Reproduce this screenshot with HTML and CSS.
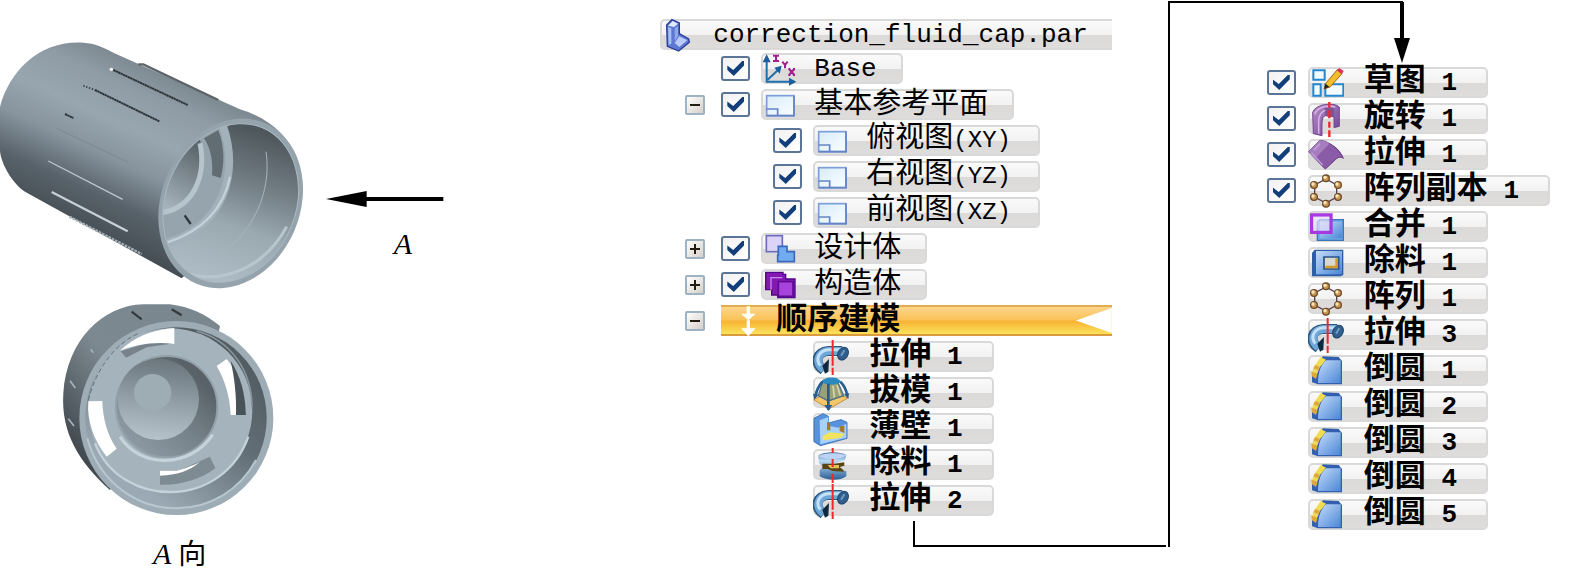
FILE: index.html
```
<!doctype html>
<html lang="zh-CN">

<head>
    <meta charset="UTF-8">
    <meta name="viewport" content="width=device-width, initial-scale=1.0">
    <title>correction_fluid_cap.par</title>
    <link rel="stylesheet" href="styles.css">
</head>

<body>
    <!-- icon shapes used by the tree rows -->
    <svg class="defs" width="0" height="0" aria-hidden="true">
        <defs>
            <linearGradient id="blue" x1="0" y1="0" x2="1" y2="1">
                <stop offset="0" stop-color="#c4dcf8" />
                <stop offset="1" stop-color="#4b86d8" />
            </linearGradient>
            <linearGradient id="pale" x1="0" y1="0" x2="1" y2="1">
                <stop offset="0" stop-color="#d8ecfb" />
                <stop offset="1" stop-color="#fafeff" />
            </linearGradient>
            <linearGradient id="purple" x1="0" y1="0" x2="1" y2="1">
                <stop offset="0" stop-color="#b98fcb" />
                <stop offset="1" stop-color="#6d3f92" />
            </linearGradient>
            <linearGradient id="tube" x1="0" y1="0" x2="0" y2="1">
                <stop offset="0" stop-color="#3f70a0" />
                <stop offset=".3" stop-color="#b9dcf4" />
                <stop offset="1" stop-color="#2c5f96" />
            </linearGradient>
        </defs>
        <symbol id="part" viewBox="0 0 108 108">
            <path d="M20 24 36 8 58 18 58 50 86 66 88 76 56 102 22 88Z" fill="#5d78d0" stroke="#2b3d99" stroke-width="4" />
            <path d="M24 26 38 12 54 20 42 30Z" fill="#dfe9ff" />
            <path d="M24 30 34 34 34 80 26 84Z" fill="#a9c0f5" />
            <path d="M44 34 54 28V58L44 74Z" fill="#8fa8ea" />
            <path d="M44 78 58 58 82 70 58 90Z" fill="#bacbfa" />
        </symbol>
        <symbol id="base" viewBox="0 0 108 108">
            <path d="M17 92V18M14 92H98M20 86 58 50" stroke="#1e6fae" stroke-width="6" fill="none" />
            <path d="M5 34 17 10 29 34ZM84 80 106 92 84 104ZM40 50 62 44 56 68Z" fill="#1b5f9f" />
            <path d="M36 14H54M45 14V30M36 30H54M64 32 72 42 80 32M72 42V52M84 54 100 72M100 54 84 72M82 54H88M96 54H102M82 72H88M96 72H102" stroke="#a2208e" stroke-width="6" fill="none" />
        </symbol>
        <symbol id="plane" viewBox="0 0 108 108">
            <rect x="17" y="26" width="82" height="60" fill="url(#pale)" stroke="#7d9ed8" stroke-width="5" />
            <path d="M17 66H50V86M99 26V86H17" fill="none" stroke="#6484c6" stroke-width="5" />
        </symbol>
        <symbol id="design" viewBox="0 0 108 108">
            <rect x="16" y="14" width="48" height="48" fill="#dcd4f6" stroke="#6c6cc0" stroke-width="5" />
            <path d="M52 46H78V62H100V92H50V72H52Z" fill="#71abf0" stroke="#3a68bd" stroke-width="5" />
        </symbol>
        <symbol id="construct" viewBox="0 0 108 108">
            <path d="M14 16H66V22H74V36H102V92H50V84H32V68H14Z" fill="#8318b4" stroke="#4f0788" stroke-width="4" />
            <path d="M30 68V32H64" fill="none" stroke="#c68ce8" stroke-width="4" />
            <rect x="52" y="44" width="44" height="44" fill="#a743dc" stroke="#5e0c92" stroke-width="5" />
        </symbol>
        <symbol id="ordered" viewBox="0 0 108 108">
            <path d="M80 10H90V32H107L85 52 63 32H80ZM80 52H90V76H107L85 100 63 76H80Z" fill="#fff" />
        </symbol>
        <symbol id="revolve" viewBox="0 0 108 108">
            <path d="M32 94C2 72 10 38 46 36H88" fill="none" stroke="#2e587f" stroke-width="30" />
            <path d="M32 92C6 72 12 40 46 36H88" fill="none" stroke="#6ea6d8" stroke-width="24" />
            <path d="M22 80C6 60 18 34 46 32H84" fill="none" stroke="#c3e1f8" stroke-width="9" />
            <path d="M28 80 48 60 46 98 36 104Z" fill="#10283f" />
            <ellipse cx="90" cy="44" rx="15" ry="20" transform="rotate(28 90 44)" fill="#315f8d" stroke="#1f4569" stroke-width="3" />
            <path d="M84 50 94 34" stroke="#6f9cc6" stroke-width="6" />
            <path d="M59 3V80M59 86V108" stroke="#f0282d" stroke-width="6" />
        </symbol>
        <symbol id="draft" viewBox="0 0 108 108">
            <path d="M2 74 46 52 106 68 48 102Z" fill="#f4c66b" stroke="#c6913b" stroke-width="3" />
            <path d="M30 16 70 12 92 62 46 78 16 62Z" fill="#99a276" stroke="#4f6f87" stroke-width="4" />
            <path d="M26 20C36 2 76 4 84 20 68 32 40 32 26 20Z" fill="#2b89bd" />
            <path d="M28 20C18 32 10 48 8 62M46 26V104M82 20C92 30 100 46 102 60" stroke="#245d90" stroke-width="8" fill="none" />
            <path d="M60 32 64 68M72 30 82 62" stroke="#d6d6a8" stroke-width="5" />
            <path d="M34 90H58L46 108ZM0 56 16 60 4 74ZM94 58 108 54 106 72Z" fill="#245d90" />
        </symbol>
        <symbol id="thin" viewBox="0 0 108 108">
            <path d="M3 22 30 8 46 16V36L84 26 102 34V82L22 104 3 92Z" fill="#5793dd" stroke="#4377ba" stroke-width="3" />
            <path d="M20 28 46 18V44L76 50 100 38V80L22 100Z" fill="#a8d0f8" />
            <path d="M42 32 52 38V58H42ZM80 46 94 44V66L80 60Z" fill="#a57b22" />
            <path d="M28 76 50 64 94 68 84 80 30 88Z" fill="#f2e35c" />
        </symbol>
        <symbol id="cutrev" viewBox="0 0 108 108">
            <path d="M16 26C30 14 80 12 100 24L96 40 64 50 68 68 100 72V88C80 104 38 100 20 88V70L30 60 18 48Z" fill="url(#tube)" />
            <path d="M16 28C30 16 84 16 100 26 80 38 38 40 16 28Z" fill="#bcd3f1" />
            <path d="M28 50H64L94 46V56L80 60 92 70V74L60 72 44 66 28 66Z" fill="#5b4414" />
            <path d="M44 54H78V64H52Z" fill="#e0c256" />
            <path d="M59 3V18M59 36V60M59 80V108" stroke="#f0282d" stroke-width="6" />
        </symbol>
        <symbol id="sketch" viewBox="0 0 108 108">
            <path d="M16 16H50V44H16ZM16 58H38V92H16ZM52 58H106V92H52Z" fill="#f4fbff" stroke="#2386d0" stroke-width="6" />
            <path d="M48 72 54 54 88 14 102 26 66 66Z" fill="#f2bf2b" stroke="#a36a1a" stroke-width="3" />
            <path d="M48 72 53 56 64 66Z" fill="#222" />
            <path d="M86 16 94 9 107 18 101 28Z" fill="#da315c" />
        </symbol>
        <symbol id="surfrev" viewBox="0 0 108 108">
            <path d="M14 34C24 6 82 4 94 18V76L78 80V48L52 44C40 48 42 64 42 104L16 98Z" fill="url(#purple)" stroke="#74488c" stroke-width="3" />
            <path d="M52 44 78 48V20H48Z" fill="#7d5594" />
            <path d="M20 40C30 16 60 12 82 18M32 98V56C34 42 42 32 52 28" fill="none" stroke="#d4b1e2" stroke-width="5" />
            <path d="M64 3V20M64 28V52M64 62V80M64 88V108" stroke="#f0282d" stroke-width="7" />
        </symbol>
        <symbol id="surfext" viewBox="0 0 108 108">
            <path d="M2 44 36 10C50 10 66 20 78 28 92 38 100 50 106 64 98 58 90 60 82 68L52 96 34 78Z" fill="#8a5ba6" stroke="#64377f" stroke-width="3" />
            <path d="M2 44 36 10C46 10 56 14 64 20L22 64Z" fill="#a67dbd" />
            <path d="M10 48 44 84M18 40 36 20" stroke="#c49cda" stroke-width="5" />
        </symbol>
        <symbol id="pattern" viewBox="0 0 108 108">
            <path d="M54 18 86 36V72L54 90 20 72V36Z" fill="none" stroke="#573f4e" stroke-width="4" />
            <g fill="#c89650" stroke="#6d4a28" stroke-width="4">
                <circle cx="54" cy="16" r="10" />
                <circle cx="90" cy="36" r="10" />
                <circle cx="90" cy="72" r="10" />
                <circle cx="54" cy="92" r="10" />
                <circle cx="18" cy="72" r="10" />
                <circle cx="18" cy="36" r="10" />
            </g>
            <g fill="#fbe5bd">
                <circle cx="51" cy="13" r="5" />
                <circle cx="87" cy="33" r="5" />
                <circle cx="87" cy="69" r="5" />
                <circle cx="51" cy="89" r="5" />
                <circle cx="15" cy="69" r="5" />
                <circle cx="15" cy="33" r="5" />
            </g>
        </symbol>
        <symbol id="unite" viewBox="0 0 108 108">
            <path d="M28 40 36 32H106V94H28Z" fill="#6baae6" stroke="#3c76b8" stroke-width="4" />
            <path d="M36 38H102V88H36Z" fill="url(#blue)" />
            <path d="M11 18H69V70H11Z" fill="none" stroke="#a838e0" stroke-width="10" />
            <path d="M16 23H64V65H16Z" fill="#e6dcfa" fill-opacity=".7" />
        </symbol>
        <symbol id="cutout" viewBox="0 0 108 108">
            <path d="M12 24 20 14H106V90L98 94H12Z" fill="#2e5ea6" />
            <path d="M24 18H102V88H24Z" fill="url(#blue)" />
            <path d="M48 36H92V72H48Z" fill="#d8d8d2" stroke="#294f87" stroke-width="5" />
            <path d="M52 70H90V40H82V62H52Z" fill="#d09a24" />
        </symbol>
        <symbol id="round" viewBox="0 0 108 108">
            <path d="M12 70 44 10 92 12 102 24V94H30L12 88Z" fill="#345fae" />
            <path d="M54 22H98V90H30C30 60 38 36 54 22Z" fill="url(#blue)" />
            <path d="M12 62 16 44 38 12 54 20 36 42 26 66Z" fill="#f0dc51" />
            <path d="M10 56 24 60 28 66 24 78 12 70ZM22 36 36 42 30 52 16 46Z" fill="#dfa83d" />
        </symbol>
    </svg>

    <div class="page">
        <div class="views">
            <figure class="view">
                <svg class="side" viewBox="0 -90 930 900" role="img" aria-label="Cap">
                    <defs>
                        <linearGradient id="shell" gradientUnits="userSpaceOnUse" x1="400" y1="90" x2="180" y2="570">
                            <stop offset="0" stop-color="#7d8991" />
                            <stop offset=".15" stop-color="#8f9ca5" />
                            <stop offset=".36" stop-color="#98a6af" />
                            <stop offset=".56" stop-color="#87949d" />
                            <stop offset=".78" stop-color="#58626a" />
                            <stop offset="1" stop-color="#454e54" />
                        </linearGradient>
                        <linearGradient id="bore" gradientUnits="userSpaceOnUse" x1="780" y1="300" x2="640" y2="740">
                            <stop offset="0" stop-color="#4d565b" />
                            <stop offset=".35" stop-color="#727d84" />
                            <stop offset=".65" stop-color="#9aa8b0" />
                            <stop offset="1" stop-color="#adbbc4" />
                        </linearGradient>
                        <linearGradient id="hole" gradientUnits="userSpaceOnUse" x1="600" y1="350" x2="500" y2="530">
                            <stop offset="0" stop-color="#5a646a" />
                            <stop offset="1" stop-color="#a5b2bb" />
                        </linearGradient>
                        <clipPath id="mouth">
                            <ellipse cx="692" cy="519" rx="195" ry="245" transform="rotate(23 692 519)" />
                        </clipPath>
                    </defs>
                    <path d="M0 230C30 120 120 30 250 38 285 40 310 52 340 68L720 238C800 262 860 310 888 380L700 600 545 745 75 485C30 455 0 390 0 360Z" fill="url(#shell)" />
                    <path d="M415 103 430 103 655 210" stroke="#5c646a" stroke-width="7" fill="none" />
                    <ellipse cx="692" cy="520" rx="208" ry="262" transform="rotate(23 692 520)" fill="#95a3ac" />
                    <g clip-path="url(#mouth)">
                        <rect x="470" y="260" width="450" height="520" fill="url(#bore)" />
                        <path d="M460 280H665C725 410 700 560 495 640H460Z" fill="#96a4ad" />
                        <path d="M460 300H590C640 420 590 530 485 550H460Z" fill="url(#hole)" />
                        <path d="M600 340C620 440 580 530 488 548" stroke="#b6c4cc" stroke-width="15" fill="none" />
                        <path d="M668 285C720 430 670 590 496 640" stroke="#a3b1ba" stroke-width="24" fill="none" />
                        <path d="M690 440C670 540 600 605 500 638" stroke="#c3d1d9" stroke-width="7" fill="none" />
                        <path d="M612 325 655 300C674 350 674 400 662 444L636 436C640 390 630 350 612 325Z" fill="#626c73" />
                        <path d="M554 556 572 582" stroke="#30383d" stroke-width="7" />
                        <path d="M798 365C820 510 730 680 560 706" stroke="#a9b6be" stroke-width="3" fill="none" />
                        <path d="M500 700C610 780 780 740 860 590" stroke="#b8c6ce" stroke-width="9" fill="none" />
                    </g>
                    <ellipse cx="692" cy="519" rx="195" ry="245" transform="rotate(23 692 519)" fill="none" stroke="#aab8c1" stroke-width="3" />
                    <path d="M340 120 563 225M285 180 478 274M195 252 220 264" stroke="#2d3439" stroke-width="6" stroke-dasharray="7 1" />
                    <path d="M250 167 285 180" stroke="#2d3439" stroke-width="5" stroke-dasharray="4 5" />
                    <path d="M170 295 385 397" stroke="#7d8990" stroke-width="3" />
                    <path d="M145 393 368 508" stroke="#bcc8cf" stroke-width="4" />
                    <path d="M155 486 383 604" stroke="#c6d0d6" stroke-width="7" />
                    <path d="M208 560 425 672" stroke="#a7b1b7" stroke-width="7" stroke-dasharray="8 3" />
                    <circle cx="334" cy="118" r="5" fill="#fff" />
                </svg>
                <div class="direction">
                    <svg class="arrow" viewBox="0 0 354 48" aria-hidden="true">
                        <path d="M0 24 122 0V18H352V30H122V48Z" />
                    </svg>
                    <em>A</em>
                </div>
            </figure>
            <figure class="view front-view">
                <svg class="front" viewBox="60 30 660 660" role="img" aria-label="Cap, direction A">
                    <defs>
                        <linearGradient id="rim" x1=".7" y1="0" x2="0" y2=".7">
                            <stop offset="0" stop-color="#7b878f" />
                            <stop offset=".5" stop-color="#7d8991" />
                            <stop offset="1" stop-color="#424a50" />
                        </linearGradient>
                        <linearGradient id="wall" gradientUnits="userSpaceOnUse" x1="660" y1="280" x2="380" y2="650">
                            <stop offset="0" stop-color="#535d64" />
                            <stop offset=".4" stop-color="#626e76" />
                            <stop offset="1" stop-color="#9aa9b3" />
                        </linearGradient>
                        <linearGradient id="well" gradientUnits="userSpaceOnUse" x1="500" y1="290" x2="300" y2="500">
                            <stop offset="0" stop-color="#596268" />
                            <stop offset=".5" stop-color="#78848c" />
                            <stop offset="1" stop-color="#8e9ba4" />
                        </linearGradient>
                        <linearGradient id="cone" gradientUnits="userSpaceOnUse" x1="370" y1="210" x2="340" y2="450">
                            <stop offset="0" stop-color="#6b767d" />
                            <stop offset=".5" stop-color="#919ea6" />
                            <stop offset="1" stop-color="#b6c3cb" />
                        </linearGradient>
                    </defs>
                    <path d="M70 310C80 150 190 45 310 43H390C450 50 500 75 540 108L500 300 210 600C120 520 62 430 70 310Z" fill="url(#rim)" />
                    <circle cx="409" cy="384" r="291" fill="#9eacb5" />
                    <circle cx="408" cy="384" r="272" fill="url(#wall)" />
                    <path d="M142 445C180 585 300 655 408 655 510 655 600 600 648 510" fill="none" stroke="#b7c7d0" stroke-width="6" />
                    <circle cx="391" cy="361" r="246" fill="#a5b3bc" />
                    <path d="M165 460C205 560 300 606 391 606 500 606 590 540 625 440" fill="none" stroke="#c4d2da" stroke-width="7" />
                    <path d="M470 123C570 150 635 240 636 350" fill="none" stroke="#87949c" stroke-width="5" />
                    <circle cx="380" cy="350" r="152" fill="url(#well)" stroke="#93a1aa" stroke-width="6" />
                    <path d="M240 440C300 536 450 536 518 434" fill="none" stroke="#c6d3da" stroke-width="10" />
                    <circle cx="355" cy="328" r="122" fill="url(#cone)" />
                    <circle cx="338" cy="308" r="56" fill="#9eacb4" />
                    <path d="M242 184 325 158 403 160 320 172 258 203Z" fill="#77828a" />
                    <path d="M240 182C280 142 340 118 403 114V162C345 154 285 164 240 182Z" fill="#fff" />
                    <path d="M560 207C596 250 616 310 618 375H572C570 325 558 276 530 228Z" fill="#fff" />
                    <path d="M572 212C602 260 616 310 618 375H588C590 320 584 265 572 212Z" fill="#485259" />
                    <path d="M145 334 187 333C188 385 202 435 230 476L200 500C162 452 140 392 145 334Z" fill="#fff" />
                    <path d="M360 542H415L510 500 526 535C480 570 420 586 360 584Z" fill="#7f8b93" />
                    <path d="M360 542H410C440 534 460 526 480 516 450 542 410 556 360 557Z" fill="#fff" />
                    <path d="M275 65 305 88M395 58 425 76" stroke="#343b40" stroke-width="7" />
                    <path d="M90 272 106 294M85 386 102 408M152 178 160 188" stroke="#a8b3ba" stroke-width="5" />
                    <path d="M145 330C165 250 215 165 300 128" stroke="#65717a" stroke-width="3" stroke-dasharray="14 8" fill="none" />
                </svg>
                <figcaption><em>A</em> 向</figcaption>
            </figure>
        </div>

        <div class="tree">
            <div class="item root"><svg class="icon"><use href="#part" /></svg><span class="name code">correction_fluid_cap.par</span></div>
            <ul>
                <li class="row">
                    <span class="toggle-space"></span>
                    <input type="checkbox" id="c-base" checked>
                    <label class="item" for="c-base"><svg class="icon"><use href="#base" /></svg><span class="name code">Base</span></label>
                </li>
                <li>
                    <div class="row">
                        <button type="button" class="toggle" aria-label="Collapse"></button>
                        <input type="checkbox" id="c-planes" checked>
                        <label class="item" for="c-planes"><svg class="icon"><use href="#plane" /></svg><span class="name">基本参考平面</span></label>
                    </div>
                    <ul class="planes">
                        <li class="row">
                            <input type="checkbox" id="c-xy" checked>
                            <label class="item" for="c-xy"><svg class="icon"><use href="#plane" /></svg><span class="name">俯视图<span class="axis">(XY)</span></span></label>
                        </li>
                        <li class="row">
                            <input type="checkbox" id="c-yz" checked>
                            <label class="item" for="c-yz"><svg class="icon"><use href="#plane" /></svg><span class="name">右视图<span class="axis">(YZ)</span></span></label>
                        </li>
                        <li class="row">
                            <input type="checkbox" id="c-xz" checked>
                            <label class="item" for="c-xz"><svg class="icon"><use href="#plane" /></svg><span class="name">前视图<span class="axis">(XZ)</span></span></label>
                        </li>
                    </ul>
                </li>
                <li class="row">
                    <button type="button" class="toggle closed" aria-label="Expand"></button>
                    <input type="checkbox" id="c-design" checked>
                    <label class="item" for="c-design"><svg class="icon"><use href="#design" /></svg><span class="name">设计体</span></label>
                </li>
                <li class="row">
                    <button type="button" class="toggle closed" aria-label="Expand"></button>
                    <input type="checkbox" id="c-construct" checked>
                    <label class="item" for="c-construct"><svg class="icon"><use href="#construct" /></svg><span class="name">构造体</span></label>
                </li>
                <li>
                    <div class="row">
                        <button type="button" class="toggle" aria-label="Collapse"></button>
                        <div class="item ordered"><svg class="icon"><use href="#ordered" /></svg><span class="name">顺序建模</span></div>
                    </div>
                    <ul class="features">
                        <li class="row"><div class="item"><svg class="icon"><use href="#revolve" /></svg><span class="name">拉伸<span class="num"> 1</span></span></div></li>
                        <li class="row"><div class="item"><svg class="icon"><use href="#draft" /></svg><span class="name">拔模<span class="num"> 1</span></span></div></li>
                        <li class="row"><div class="item"><svg class="icon"><use href="#thin" /></svg><span class="name">薄壁<span class="num"> 1</span></span></div></li>
                        <li class="row"><div class="item"><svg class="icon"><use href="#cutrev" /></svg><span class="name">除料<span class="num"> 1</span></span></div></li>
                        <li class="row"><div class="item"><svg class="icon"><use href="#revolve" /></svg><span class="name">拉伸<span class="num"> 2</span></span></div></li>
                    </ul>
                </li>
            </ul>
        </div>

        <ul class="features more">
            <li class="row">
                <input type="checkbox" id="c-sketch" checked>
                <label class="item" for="c-sketch"><svg class="icon"><use href="#sketch" /></svg><span class="name">草图<span class="num"> 1</span></span></label>
            </li>
            <li class="row">
                <input type="checkbox" id="c-revolve" checked>
                <label class="item" for="c-revolve"><svg class="icon"><use href="#surfrev" /></svg><span class="name">旋转<span class="num"> 1</span></span></label>
            </li>
            <li class="row">
                <input type="checkbox" id="c-extrude" checked>
                <label class="item" for="c-extrude"><svg class="icon"><use href="#surfext" /></svg><span class="name">拉伸<span class="num"> 1</span></span></label>
            </li>
            <li class="row">
                <input type="checkbox" id="c-copy" checked>
                <label class="item" for="c-copy"><svg class="icon"><use href="#pattern" /></svg><span class="name">阵列副本<span class="num"> 1</span></span></label>
            </li>
            <li class="row plain"><div class="item"><svg class="icon"><use href="#unite" /></svg><span class="name">合并<span class="num"> 1</span></span></div></li>
            <li class="row plain"><div class="item"><svg class="icon"><use href="#cutout" /></svg><span class="name">除料<span class="num"> 1</span></span></div></li>
            <li class="row plain"><div class="item"><svg class="icon"><use href="#pattern" /></svg><span class="name">阵列<span class="num"> 1</span></span></div></li>
            <li class="row plain"><div class="item"><svg class="icon"><use href="#revolve" /></svg><span class="name">拉伸<span class="num"> 3</span></span></div></li>
            <li class="row plain"><div class="item"><svg class="icon"><use href="#round" /></svg><span class="name">倒圆<span class="num"> 1</span></span></div></li>
            <li class="row plain"><div class="item"><svg class="icon"><use href="#round" /></svg><span class="name">倒圆<span class="num"> 2</span></span></div></li>
            <li class="row plain"><div class="item"><svg class="icon"><use href="#round" /></svg><span class="name">倒圆<span class="num"> 3</span></span></div></li>
            <li class="row plain"><div class="item"><svg class="icon"><use href="#round" /></svg><span class="name">倒圆<span class="num"> 4</span></span></div></li>
            <li class="row plain"><div class="item"><svg class="icon"><use href="#round" /></svg><span class="name">倒圆<span class="num"> 5</span></span></div></li>
        </ul>

        <!-- line from the end of the first list to the top of the second -->
        <svg class="connector" viewBox="0 0 1580 569" aria-hidden="true">
            <path d="M914 521V546H1166M1169 547V2H1403" fill="none" stroke="#000" stroke-width="2" />
            <path d="M1402 2V42" stroke="#000" stroke-width="4" />
            <path d="M1394 38H1410L1402 63Z" />
        </svg>
    </div>
</body>

</html>
```
FILE: styles.css
```
* {
    box-sizing: border-box;
}

body {
    margin: 0;
    background: white;
    color: #000;
    font-family: "Liberation Sans", "Noto Sans CJK SC", sans-serif;
}

.defs {
    display: block;
}

ul {
    list-style: none;
    margin: 0;
    padding: 0;
}

.page {
    position: relative;
    display: grid;
    grid-template-columns: 662fr 604fr 314fr;
    align-items: start;
}

.connector {
    position: absolute;
    top: 0;
    left: 0;
    width: 100%;
    pointer-events: none;
}

/* drawings */
.view {
    margin: 0;
    display: flex;
}

.side {
    width: 310px;
    height: 300px;
}

.direction {
    display: flex;
    flex-direction: column;
    align-items: flex-end;
    padding: 191px 0 0 16px;
}

.direction em {
    padding: 20px 32px 0 0;
}

.arrow {
    width: 118px;
    height: 16px;
}

.view em {
    font-family: "Liberation Serif", serif;
    font-size: 30px;
    line-height: 34px;
}

.front-view {
    flex-direction: column;
    width: 280px;
    padding-left: 60px;
}

.front {
    width: 220px;
    height: 220px;
}

.front-view figcaption {
    padding: 17px 0 0 93px;
    font-family: "Liberation Serif", "Noto Sans CJK SC", serif;
    font-size: 28px;
    line-height: 32px;
    height: 49px;
}

/* feature tree */
.tree {
    padding: 19px 155px 0 0;
}

.tree > ul {
    padding: 3px 0 0 25px;
}

.row {
    display: flex;
    align-items: center;
    margin-bottom: 5px;
}

.item {
    display: flex;
    align-items: center;
    height: 31px;
    padding-right: 24px;
    border: 2px solid #d9d9d9;
    border-radius: 5px;
    background: linear-gradient(#fafafa, #f2f2f2 50%, #dcdad9 52%, #dfdddc);
}

.root {
    border-right: 0;
    border-radius: 5px 0 0 5px;
}

.icon {
    flex: none;
    width: 36px;
    height: 36px;
    margin: -4px 17px -4px -2px;
}

.name {
    font-size: 29px;
    line-height: 28px;
    padding-bottom: 3px;
    white-space: pre;
}

.code {
    font-family: "Liberation Mono", monospace;
    font-size: 26px;
    padding-bottom: 0;
}

.axis {
    font-family: "Liberation Mono", monospace;
    font-size: 24px;
}

.planes .item {
    padding-right: 27px;
}

.toggle,
.toggle-space {
    flex: none;
    width: 20px;
    margin: 0 16px 0 0;
}

.toggle {
    position: relative;
    height: 20px;
    padding: 0;
    border: 2px solid #9db2c3;
    border-radius: 2px;
    background: linear-gradient(135deg, #fff, #d5d0c8);
}

.toggle::before,
.toggle.closed::after {
    content: "";
    position: absolute;
    left: 3px;
    top: 7px;
    width: 10px;
    height: 2px;
    background: #221c12;
}

.toggle.closed::after {
    transform: rotate(90deg);
}

input[type="checkbox"] {
    appearance: none;
    flex: none;
    width: 29px;
    height: 25px;
    margin: 0 11px 0 0;
    padding: 3px 4px;
    border: 2px solid #5c7596;
    border-radius: 3px;
    background: linear-gradient(135deg, #f0f1f0, #fff);
}

input[type="checkbox"]:checked::before {
    content: "";
    display: block;
    width: 17px;
    height: 15px;
    background: #123f7c;
    clip-path: polygon(0 30%, 35% 60%, 88% 0, 100% 0, 100% 28%, 38% 100%, 0 60%);
}

.planes {
    padding-left: 88px;
}

.ordered {
    flex: 1;
    border: 0;
    border-bottom: 2px solid #d99b3d;
    border-top: 2px solid #e0ad52;
    border-radius: 0;
    background: linear-gradient(#fbd68c, #fac257 48%, #f8b234 52%, #fbe25c);
}

.ordered .icon {
    margin-left: -1px;
    margin-right: 20px;
}

.ordered::after {
    content: "";
    width: 36px;
    height: 25px;
    margin: 0 -24px 0 auto;
    background: white;
    clip-path: polygon(0 50%, 100% 0, 100% 100%);
}

.ordered .name {
    font-weight: bold;
    font-size: 31px;
}

.features {
    font-weight: bold;
}

.tree .features {
    padding-left: 128px;
}

.features .item {
    padding-right: 29px;
}

.features .icon {
    margin-right: 20px;
}

.features .name {
    font-size: 31px;
}

.num {
    font-family: "Liberation Mono", monospace;
    font-size: 26px;
}

.more {
    padding-top: 67px;
}

.features input[type="checkbox"] {
    margin-right: 12px;
}

.plain {
    padding-left: 41px;
}
```
